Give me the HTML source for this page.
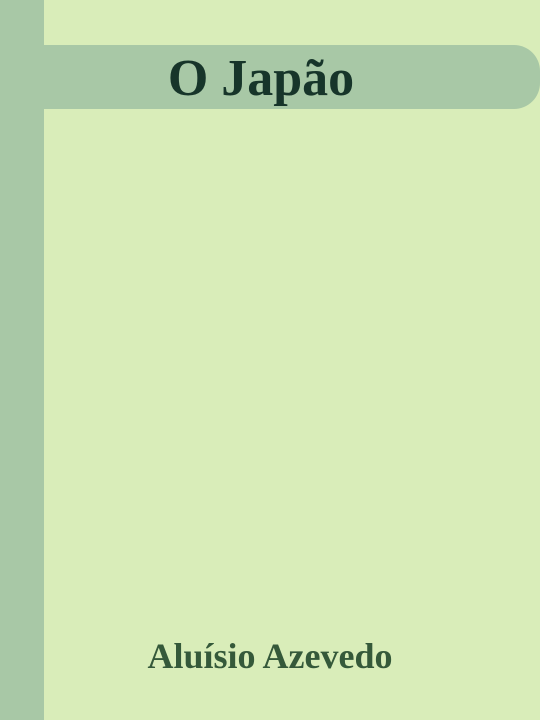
<!DOCTYPE html>
<html><head><style>
body{margin:0;width:540px;height:720px;background:#d9edb9;position:relative;overflow:hidden;font-family:"Liberation Serif",serif;font-weight:bold}
.bar{position:absolute;left:0;top:0;width:44px;height:720px;background:#a8c8a6}
.band{position:absolute;left:44px;top:45px;width:496px;height:64px;background:#a8c8a6;border-radius:0 26px 26px 0}
.t{position:absolute;left:0;width:522px;top:49px;text-align:center;font-size:52px;color:#17352a;line-height:60px}
.a{position:absolute;left:0;width:540px;top:636px;text-align:center;font-size:36px;color:#35593a;line-height:40px}
</style></head><body>
<div class="bar"></div><div class="band"></div>
<div class="t">O Japão</div>
<div class="a">Aluísio Azevedo</div>
</body></html>
